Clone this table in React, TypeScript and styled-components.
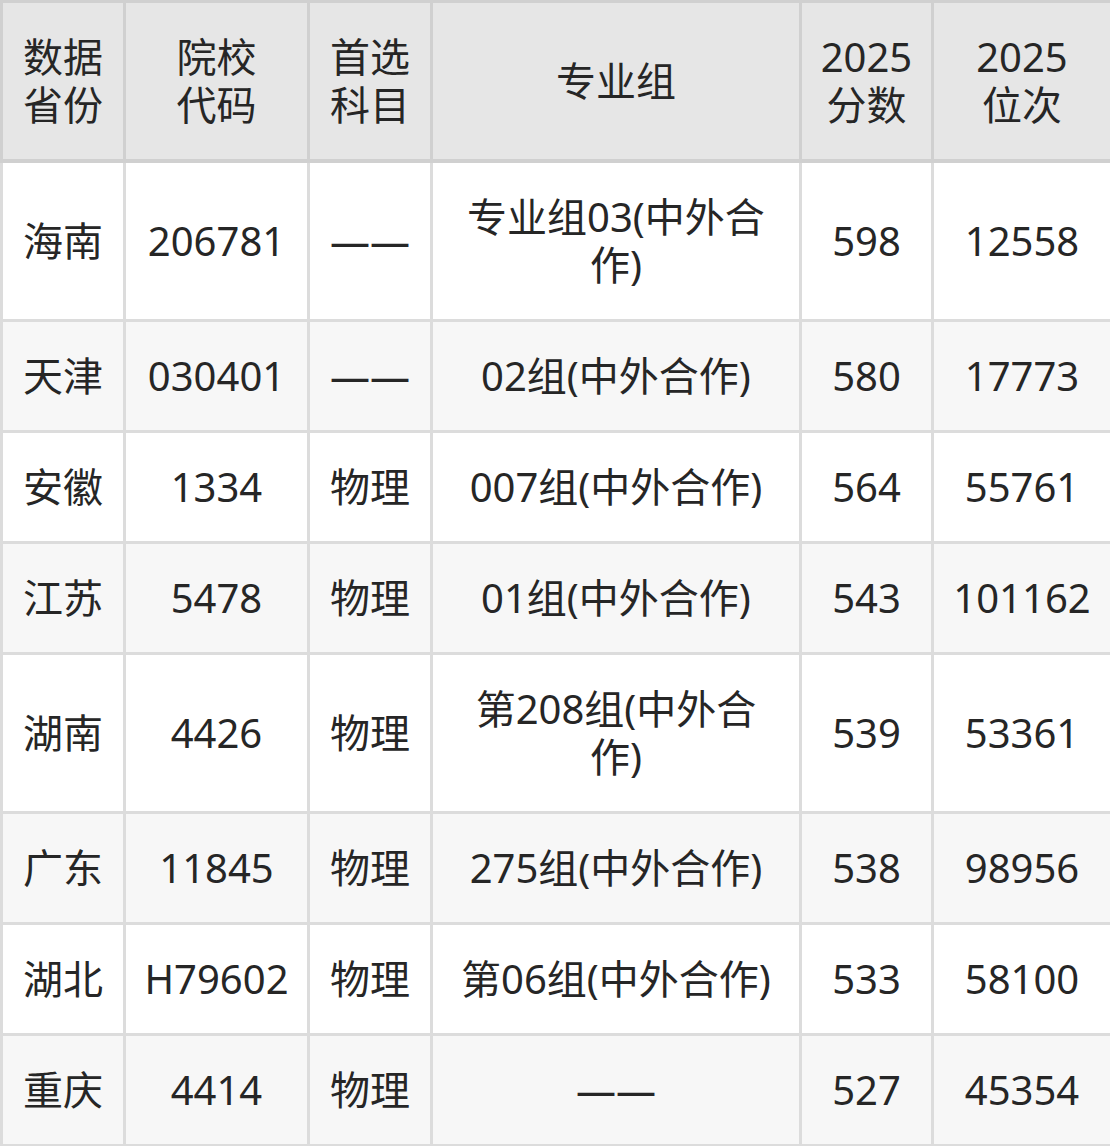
import { Fragment } from 'react'
import styled, { createGlobalStyle } from 'styled-components'

const GlobalStyle = createGlobalStyle`
	html, body {
		margin: 0;
		padding: 0;
		background: #ffffff;
	}
`

const Table = styled.table`
	width: 1110px;
	border-collapse: collapse;
	table-layout: fixed;
	font-family: "Noto Sans", "Noto Sans CJK SC", sans-serif;
	font-size: 40px;
	line-height: 48px;
	color: #262626;
`

const HeadCell = styled.th`
	background: #e6e6e6;
	border: 3px solid #d0d0d0;
	border-bottom-width: 4px;
	padding: 30px 10px;
	font-weight: 400;
	text-align: center;
	vertical-align: middle;
`

const Row = styled.tr<{ striped: boolean }>`
	background: ${props => (props.striped ? '#f7f7f7' : '#ffffff')};
`

const Cell = styled.td`
	border: 3px solid #dcdcdc;
	padding: 30px 20px;
	text-align: center;
	vertical-align: middle;
`

// numbers and short labels stay on one line, even in narrow columns
const NoWrap = styled.span`
	white-space: nowrap;
	margin: 0 -16px;
`

const columns = [
	{ width: 123, label: ['数据', '省份'] },
	{ width: 184, label: ['院校', '代码'] },
	{ width: 123, label: ['首选', '科目'] },
	{ width: 369, label: ['专业组'] },
	{ width: 132, label: ['2025', '分数'] },
	{ width: 179, label: ['2025', '位次'] }
]

const rows = [
	['海南', '206781', '——', '专业组03(中外合作)', '598', '12558'],
	['天津', '030401', '——', '02组(中外合作)', '580', '17773'],
	['安徽', '1334', '物理', '007组(中外合作)', '564', '55761'],
	['江苏', '5478', '物理', '01组(中外合作)', '543', '101162'],
	['湖南', '4426', '物理', '第208组(中外合作)', '539', '53361'],
	['广东', '11845', '物理', '275组(中外合作)', '538', '98956'],
	['湖北', 'H79602', '物理', '第06组(中外合作)', '533', '58100'],
	['重庆', '4414', '物理', '——', '527', '45354']
]

const App = () => (
	<>
		<GlobalStyle />
		<Table>
			<colgroup>
				{columns.map((c, i) => (
					<col key={i} style={{ width: c.width }} />
				))}
			</colgroup>
			<thead>
				<tr>
					{columns.map((c, i) => (
						<HeadCell key={i}>
							{c.label.map((l, j) => (
								<Fragment key={j}>
									{j > 0 && <br />}
									{l}
								</Fragment>
							))}
						</HeadCell>
					))}
				</tr>
			</thead>
			<tbody>
				{rows.map((r, i) => (
					<Row key={i} striped={i % 2 === 1}>
						{r.map((v, j) => (
							<Cell key={j}>{j === 3 ? v : <NoWrap>{v}</NoWrap>}</Cell>
						))}
					</Row>
				))}
			</tbody>
		</Table>
	</>
)

export default App
